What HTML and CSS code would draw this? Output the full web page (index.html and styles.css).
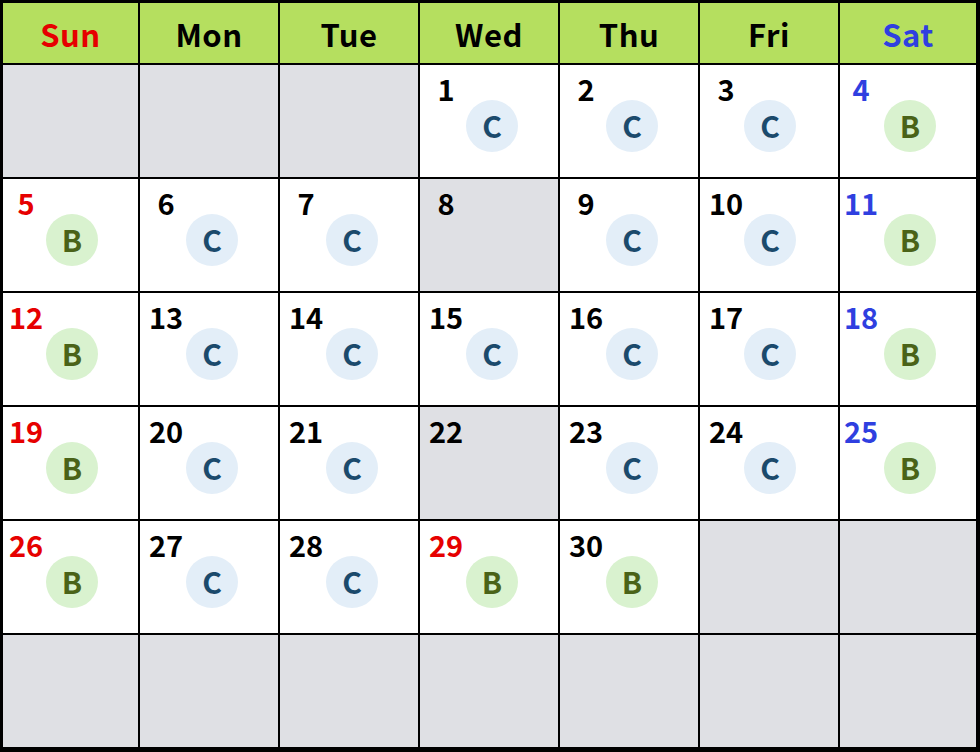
FILE: index.html
```html
<!DOCTYPE html>
<html lang="en">
<head>
<meta charset="utf-8">
<title>Calendar</title>
<link rel="stylesheet" href="styles.css">
</head>
<body>
<div class="calendar">
  <div class="head sun-t">Sun</div>
  <div class="head">Mon</div>
  <div class="head">Tue</div>
  <div class="head">Wed</div>
  <div class="head">Thu</div>
  <div class="head">Fri</div>
  <div class="head sat-t">Sat</div>

  <div class="day off"></div>
  <div class="day off"></div>
  <div class="day off"></div>
  <div class="day"><div class="num">1</div><div class="badge c">C</div></div>
  <div class="day"><div class="num">2</div><div class="badge c">C</div></div>
  <div class="day fri"><div class="num">3</div><div class="badge c">C</div></div>
  <div class="day sat"><div class="num">4</div><div class="badge b">B</div></div>

  <div class="day sun"><div class="num">5</div><div class="badge b">B</div></div>
  <div class="day"><div class="num">6</div><div class="badge c">C</div></div>
  <div class="day"><div class="num">7</div><div class="badge c">C</div></div>
  <div class="day off"><div class="num">8</div></div>
  <div class="day"><div class="num">9</div><div class="badge c">C</div></div>
  <div class="day fri"><div class="num">10</div><div class="badge c">C</div></div>
  <div class="day sat"><div class="num">11</div><div class="badge b">B</div></div>

  <div class="day sun"><div class="num">12</div><div class="badge b">B</div></div>
  <div class="day"><div class="num">13</div><div class="badge c">C</div></div>
  <div class="day"><div class="num">14</div><div class="badge c">C</div></div>
  <div class="day"><div class="num">15</div><div class="badge c">C</div></div>
  <div class="day"><div class="num">16</div><div class="badge c">C</div></div>
  <div class="day fri"><div class="num">17</div><div class="badge c">C</div></div>
  <div class="day sat"><div class="num">18</div><div class="badge b">B</div></div>

  <div class="day sun"><div class="num">19</div><div class="badge b">B</div></div>
  <div class="day"><div class="num">20</div><div class="badge c">C</div></div>
  <div class="day"><div class="num">21</div><div class="badge c">C</div></div>
  <div class="day off"><div class="num">22</div></div>
  <div class="day"><div class="num">23</div><div class="badge c">C</div></div>
  <div class="day fri"><div class="num">24</div><div class="badge c">C</div></div>
  <div class="day sat"><div class="num">25</div><div class="badge b">B</div></div>

  <div class="day sun"><div class="num">26</div><div class="badge b">B</div></div>
  <div class="day"><div class="num">27</div><div class="badge c">C</div></div>
  <div class="day"><div class="num">28</div><div class="badge c">C</div></div>
  <div class="day"><div class="num red">29</div><div class="badge b">B</div></div>
  <div class="day"><div class="num">30</div><div class="badge b">B</div></div>
  <div class="day off"></div>
  <div class="day off"></div>

  <div class="day off"></div>
  <div class="day off"></div>
  <div class="day off"></div>
  <div class="day off"></div>
  <div class="day off"></div>
  <div class="day off"></div>
  <div class="day off"></div>
</div>
</body>
</html>
```

FILE: styles.css
```css
html, body {
  margin: 0;
  padding: 0;
  background: #000;
}

.calendar {
  box-sizing: border-box;
  width: 980px;
  height: 752px;
  background: #000;
  padding: 3px 4px 5px 3px;
  display: grid;
  grid-template-columns: 135px 138px 138px 138px 138px 138px 136px;
  grid-template-rows: 60px repeat(6, 112px);
  gap: 2px;
  font-family: "Noto Sans CJK JP", "Noto Sans", sans-serif;
  font-weight: 700;
  color: #000;
}

.head {
  background: #b5df5f;
  font-size: 31px;
  line-height: 60px;
  padding-top: 1px;
  box-sizing: border-box;
  text-align: center;
  letter-spacing: 0.5px;
}

.sun-t { color: #e60000; }
.sat-t { color: #2f3fe0; }

.day {
  background: #fff;
  display: flex;
  flex-direction: column;
  align-items: flex-start;
}

.day.off { background: #dfe0e4; }

.num {
  width: 52px;
  text-align: center;
  font-size: 29px;
  line-height: 30px;
  padding-top: 8px;
  margin-bottom: -3px;
}

.sun .num { width: 46px; color: #e60000; }
.sat .num { width: 42px; color: #2f3fe0; }
.num.red { color: #e60000; }

.badge {
  width: 52px;
  height: 52px;
  border-radius: 50%;
  margin-left: 46px;
  text-align: center;
  font-size: 30px;
  line-height: 51px;
}

.sun .badge { margin-left: 43px; }
.fri .badge, .sat .badge { margin-left: 44px; }

.badge.c { background: #e3eef8; color: #1b4a6c; }
.badge.b { background: #d9f2cf; color: #4a6318; }
```
